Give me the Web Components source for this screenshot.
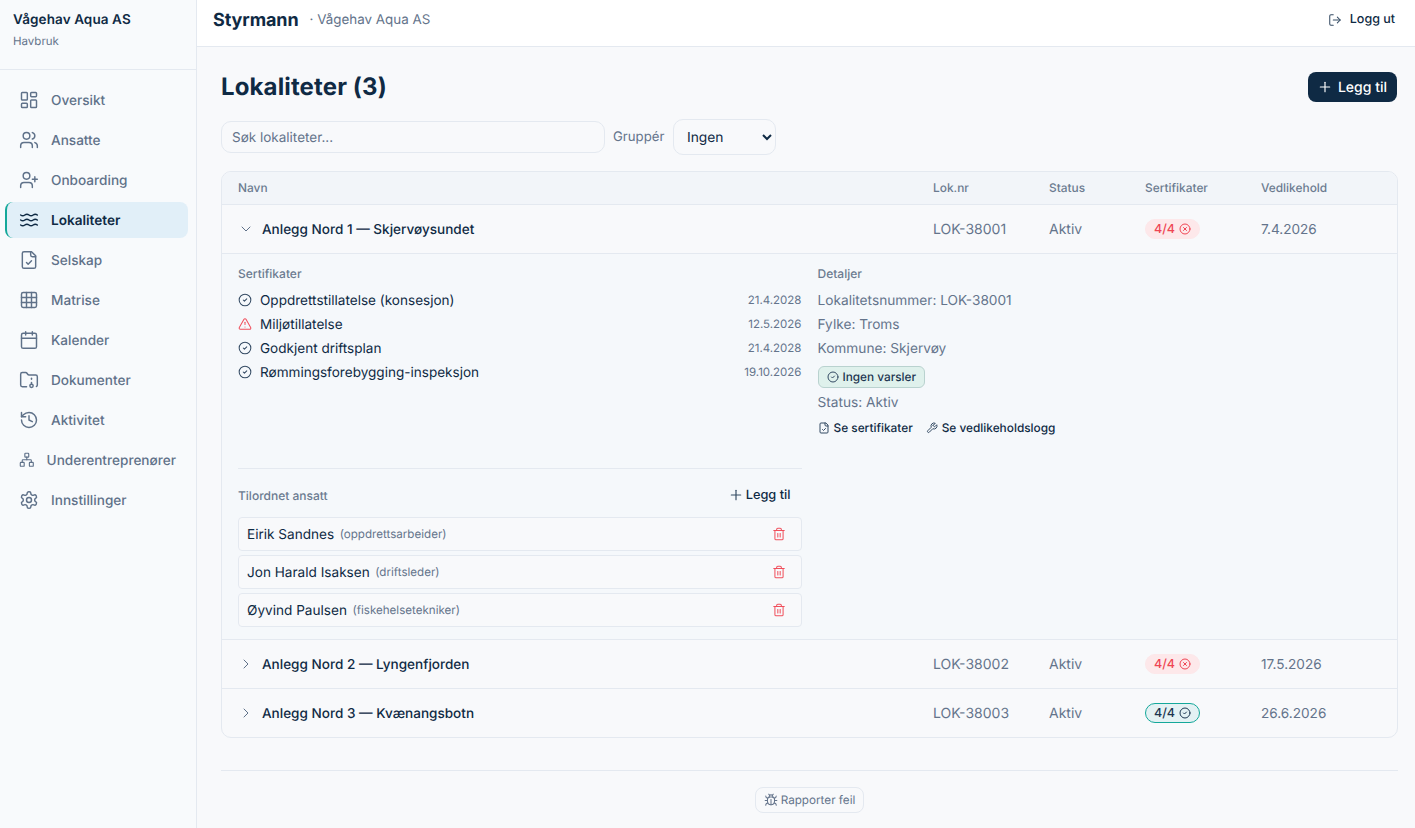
<!DOCTYPE html>
<html lang="no">
<head>
<meta charset="utf-8">
<title>Lokaliteter</title>
<style>
    html, body { margin: 0; height: 100%; overflow: hidden; }
    body { font-family: Inter, "Liberation Sans", sans-serif; color: #0f2a44; background: #f8f9fb; text-rendering: geometricPrecision; }
</style>
</head>
<body>
<app-shell>
    <app-sidebar slot="sidebar" company="Vågehav Aqua AS" sector="Havbruk">
        <nav-item icon="dashboard">Oversikt</nav-item>
        <nav-item icon="users">Ansatte</nav-item>
        <nav-item icon="userplus">Onboarding</nav-item>
        <nav-item icon="waves" active>Lokaliteter</nav-item>
        <nav-item icon="filecheck">Selskap</nav-item>
        <nav-item icon="grid">Matrise</nav-item>
        <nav-item icon="calendar">Kalender</nav-item>
        <nav-item icon="folder">Dokumenter</nav-item>
        <nav-item icon="history">Aktivitet</nav-item>
        <nav-item icon="network">Underentreprenører</nav-item>
        <nav-item icon="settings">Innstillinger</nav-item>
    </app-sidebar>
    <app-header slot="header" brand="Styrmann" company="· Vågehav Aqua AS"></app-header>
    <page-head>Lokaliteter (3)</page-head>
    <filter-bar></filter-bar>
    <loc-table>
        <loc-row name="Anlegg Nord 1 — Skjervøysundet" nr="LOK-38001" status="Aktiv" certs="4/4" tone="bad" date="7.4.2026" open>
            <loc-detail>
                <cert-row slot="certs" icon="check" date="21.4.2028">Oppdrettstillatelse (konsesjon)</cert-row>
                <cert-row slot="certs" icon="alert" date="12.5.2026">Miljøtillatelse</cert-row>
                <cert-row slot="certs" icon="check" date="21.4.2028">Godkjent driftsplan</cert-row>
                <cert-row slot="certs" icon="check" date="19.10.2026">Rømmingsforebygging-inspeksjon</cert-row>
                <staff-row slot="staff" name="Eirik Sandnes" role="(oppdrettsarbeider)"></staff-row>
                <staff-row slot="staff" name="Jon Harald Isaksen" role="(driftsleder)"></staff-row>
                <staff-row slot="staff" name="Øyvind Paulsen" role="(fiskehelsetekniker)"></staff-row>
            </loc-detail>
        </loc-row>
        <loc-row name="Anlegg Nord 2 — Lyngenfjorden" nr="LOK-38002" status="Aktiv" certs="4/4" tone="bad" date="17.5.2026"></loc-row>
        <loc-row name="Anlegg Nord 3 — Kvænangsbotn" nr="LOK-38003" status="Aktiv" certs="4/4" tone="ok" date="26.6.2026"></loc-row>
    </loc-table>
    <page-foot></page-foot>
</app-shell>

<script>
const ICONS = {
    dashboard: '<rect x="3" y="3" width="7" height="9" rx="1"/><rect x="14" y="3" width="7" height="5" rx="1"/><rect x="14" y="12" width="7" height="9" rx="1"/><rect x="3" y="16" width="7" height="5" rx="1"/>',
    users: '<path d="M16 21v-2a4 4 0 0 0-4-4H6a4 4 0 0 0-4 4v2"/><circle cx="9" cy="7" r="4"/><path d="M22 21v-2a4 4 0 0 0-3-3.87"/><path d="M16 3.13a4 4 0 0 1 0 7.75"/>',
    userplus: '<path d="M16 21v-2a4 4 0 0 0-4-4H6a4 4 0 0 0-4 4v2"/><circle cx="9" cy="7" r="4"/><path d="M19 8v6"/><path d="M22 11h-6"/>',
    waves: '<path d="M2 6c.6.5 1.2 1 2.5 1C7 7 7 5 9.5 5c2.6 0 2.4 2 5 2 2.5 0 2.5-2 5-2 1.3 0 1.9.5 2.5 1"/><path d="M2 12c.6.5 1.2 1 2.5 1 2.5 0 2.5-2 5-2 2.6 0 2.4 2 5 2 2.5 0 2.5-2 5-2 1.3 0 1.9.5 2.5 1"/><path d="M2 18c.6.5 1.2 1 2.5 1 2.5 0 2.5-2 5-2 2.6 0 2.4 2 5 2 2.5 0 2.5-2 5-2 1.3 0 1.9.5 2.5 1"/>',
    filecheck: '<path d="M15 2H6a2 2 0 0 0-2 2v16a2 2 0 0 0 2 2h12a2 2 0 0 0 2-2V7Z"/><path d="M14 2v4a2 2 0 0 0 2 2h4"/><path d="m9 15 2 2 4-4"/>',
    grid: '<rect x="3" y="3" width="18" height="18" rx="2"/><path d="M3 9h18"/><path d="M3 15h18"/><path d="M9 3v18"/><path d="M15 3v18"/>',
    calendar: '<path d="M8 2v4"/><path d="M16 2v4"/><rect x="3" y="4" width="18" height="18" rx="2"/><path d="M3 10h18"/>',
    folder: '<circle cx="15" cy="19" r="2"/><path d="M20.9 19.8A2 2 0 0 0 22 18V8a2 2 0 0 0-2-2h-7.9a2 2 0 0 1-1.69-.9L9.6 3.9A2 2 0 0 0 7.93 3H4a2 2 0 0 0-2 2v13a2 2 0 0 0 2 2h5.1"/><path d="M15 11v-1"/><path d="M15 17v-2"/>',
    history: '<path d="M3 12a9 9 0 1 0 9-9 9.75 9.75 0 0 0-6.74 2.74L3 8"/><path d="M3 3v5h5"/><path d="M12 7v5l4 2"/>',
    network: '<rect x="16" y="16" width="6" height="6" rx="1"/><rect x="2" y="16" width="6" height="6" rx="1"/><rect x="9" y="2" width="6" height="6" rx="1"/><path d="M5 16v-3a1 1 0 0 1 1-1h12a1 1 0 0 1 1 1v3"/><path d="M12 12V8"/>',
    settings: '<path d="M12.22 2h-.44a2 2 0 0 0-2 2v.18a2 2 0 0 1-1 1.73l-.43.25a2 2 0 0 1-2 0l-.15-.08a2 2 0 0 0-2.73.73l-.22.38a2 2 0 0 0 .73 2.73l.15.1a2 2 0 0 1 1 1.72v.51a2 2 0 0 1-1 1.74l-.15.09a2 2 0 0 0-.73 2.73l.22.38a2 2 0 0 0 2.73.73l.15-.08a2 2 0 0 1 2 0l.43.25a2 2 0 0 1 1 1.73V20a2 2 0 0 0 2 2h.44a2 2 0 0 0 2-2v-.18a2 2 0 0 1 1-1.73l.43-.25a2 2 0 0 1 2 0l.15.08a2 2 0 0 0 2.73-.73l.22-.39a2 2 0 0 0-.73-2.73l-.15-.08a2 2 0 0 1-1-1.74v-.5a2 2 0 0 1 1-1.74l.15-.09a2 2 0 0 0 .73-2.73l-.22-.38a2 2 0 0 0-2.73-.73l-.15.08a2 2 0 0 1-2 0l-.43-.25a2 2 0 0 1-1-1.73V4a2 2 0 0 0-2-2z"/><circle cx="12" cy="12" r="3"/>',
    logout: '<path d="m16 17 5-5-5-5"/><path d="M21 12H9"/><path d="M9 21H5a2 2 0 0 1-2-2V5a2 2 0 0 1 2-2h4"/>',
    plus: '<path d="M5 12h14"/><path d="M12 5v14"/>',
    down: '<path d="m6 9 6 6 6-6"/>',
    right: '<path d="m9 18 6-6-6-6"/>',
    check: '<circle cx="12" cy="12" r="10"/><path d="m9 12 2 2 4-4"/>',
    alert: '<path d="m21.73 18-8-14a2 2 0 0 0-3.48 0l-8 14A2 2 0 0 0 4 21h16a2 2 0 0 0 1.73-3"/><path d="M12 9v4"/><path d="M12 17h.01"/>',
    cross: '<circle cx="12" cy="12" r="10"/><path d="m15 9-6 6"/><path d="m9 9 6 6"/>',
    trash: '<path d="M3 6h18"/><path d="M19 6v14c0 1-1 2-2 2H7c-1 0-2-1-2-2V6"/><path d="M8 6V4c0-1 1-2 2-2h4c1 0 2 1 2 2v2"/><path d="M10 11v6"/><path d="M14 11v6"/>',
    wrench: '<path d="M14.7 6.3a1 1 0 0 0 0 1.4l1.6 1.6a1 1 0 0 0 1.4 0l3.77-3.77a6 6 0 0 1-7.94 7.94l-6.91 6.91a2.12 2.12 0 0 1-3-3l6.91-6.91a6 6 0 0 1 7.94-7.94l-3.76 3.76z"/>',
    bug: '<path d="m8 2 1.88 1.88"/><path d="M14.12 3.88 16 2"/><path d="M9 7.13v-1a3.003 3.003 0 1 1 6 0v1"/><path d="M12 20c-3.3 0-6-2.7-6-6v-3a4 4 0 0 1 4-4h4a4 4 0 0 1 4 4v3c0 3.3-2.7 6-6 6"/><path d="M12 20v-9"/><path d="M6.53 9C4.6 8.8 3 7.1 3 5"/><path d="M6 13H2"/><path d="M3 21c0-2.1 1.7-3.9 3.8-4"/><path d="M20.97 5c0 2.1-1.6 3.8-3.5 4"/><path d="M22 13h-4"/><path d="M17.2 17c2.1.1 3.8 1.9 3.8 4"/>'
}

// every component gets an open shadow root with its own style
class Base extends HTMLElement {
    constructor() {
        super()
        this.attachShadow({mode: 'open'})
    }

    attr(name) {
        return this.getAttribute(name) || ''
    }
}

class LcIcon extends Base {
    connectedCallback() {
        const size = this.attr('size') || 16
        const stroke = this.attr('stroke') || 1.75
        this.shadowRoot.innerHTML = `
        <style>
            :host { display: inline-flex; flex: 0 1 ${size}px; width: ${size}px; min-width: 0; color: var(--icon-color, currentColor); }
            svg { display: block; width: 100%; height: auto; }
        </style>
        <svg viewBox="0 0 24 24" fill="none" stroke="currentColor" stroke-width="${stroke}" stroke-linecap="round" stroke-linejoin="round">${ICONS[this.attr('name')]}</svg>`
    }
}

class AppShell extends Base {
    connectedCallback() {
        this.shadowRoot.innerHTML = `
        <style>
            :host { display: flex; height: 828px; width: 1415px; overflow: hidden; }
            .col { flex: 1; min-width: 0; display: flex; flex-direction: column; }
            main { flex: 1; padding: 24px 17px 0 24px; display: flex; flex-direction: column; }
        </style>
        <slot name="sidebar"></slot>
        <div class="col">
            <slot name="header"></slot>
            <main><slot></slot></main>
        </div>`
    }
}

class AppSidebar extends Base {
    connectedCallback() {
        this.shadowRoot.innerHTML = `
        <style>
            :host { display: block; flex: none; box-sizing: border-box; width: 197px; background: #f8fafc; border-right: 1px solid #e4e9f0; }
            .top { box-sizing: border-box; height: 70px; padding: 12px 13px; border-bottom: 1px solid #e4e9f0; }
            .company { font-size: 13.5px; letter-spacing: .1px; line-height: 16px; font-weight: 600; color: #0f2a44; }
            .sector { margin-top: 5px; font-size: 11.5px; line-height: 16px; color: #64748b; }
            nav { display: flex; flex-direction: column; gap: 4px; padding: 12px 8px 0 5px; }
        </style>
        <div class="top">
            <div class="company">${this.attr('company')}</div>
            <div class="sector">${this.attr('sector')}</div>
        </div>
        <nav><slot></slot></nav>`
    }
}

class NavItem extends Base {
    connectedCallback() {
        this.shadowRoot.innerHTML = `
        <style>
            :host { display: flex; align-items: center; gap: 12px; box-sizing: border-box; height: 36px; padding: 0 12px; border-left: 2px solid transparent; border-radius: 8px; font-size: 13.6px; font-weight: 500; color: #5f7189; white-space: nowrap; }
            :host([active]) { background: #e1eff8; border-left-color: #14a89a; color: #0f2a44; font-weight: 600; }
            span { margin-top: 2px; }
        </style>
        <lc-icon name="${this.attr('icon')}" size="20"></lc-icon>
        <span><slot></slot></span>`
    }
}

class AppHeader extends Base {
    connectedCallback() {
        this.shadowRoot.innerHTML = `
        <style>
            :host { display: flex; align-items: center; box-sizing: border-box; flex: none; height: 47px; padding: 0 20px 6px 16px; background: #fff; border-bottom: 1px solid #e4e9f0; }
            .brand { font-size: 18px; letter-spacing: -.1px; font-weight: 700; color: #0f2a44; }
            .company { margin-left: 11px; font-size: 13.4px; color: #64748b; }
            .logout { margin-left: auto; display: flex; align-items: center; gap: 8px; font-size: 12.5px; font-weight: 500; color: #0f2a44; }
            .logout span { margin-bottom: 2px; }
            lc-icon { --icon-color: #334a63; }
        </style>
        <span class="brand">${this.attr('brand')}</span>
        <span class="company">${this.attr('company')}</span>
        <span class="logout"><lc-icon name="logout" size="14"></lc-icon><span>Logg ut</span></span>`
    }
}

class PageHead extends Base {
    connectedCallback() {
        this.shadowRoot.innerHTML = `
        <style>
            :host { display: flex; align-items: center; justify-content: space-between; flex: none; height: 32px; margin-bottom: 16px; }
            h1 { margin: 0 0 1px; font-size: 24px; letter-spacing: .13px; font-weight: 700; color: #0f2a44; }
            button { display: flex; align-items: center; gap: 4.5px; height: 30px; margin-right: 1px; padding: 0 10px 0 9.5px; border: 0; border-radius: 8px; background: #0f2a44; color: #fff; font: 500 14px Inter, sans-serif; text-rendering: inherit; }
        </style>
        <h1><slot></slot></h1>
        <button><lc-icon name="plus" size="16"></lc-icon>Legg til</button>`
    }
}

class FilterBar extends Base {
    connectedCallback() {
        this.shadowRoot.innerHTML = `
        <style>
            :host { display: flex; align-items: center; flex: none; height: 36px; margin-bottom: 16px; font-size: 13.2px; color: #64748b; }
            input { box-sizing: border-box; width: 384px; height: 32px; padding: 2px 10px 0; border: 1px solid #e4e9f0; border-radius: 10px; background: #f8f9fb; font: 13.5px Inter, sans-serif; color: #0f2a44; outline: none; text-rendering: inherit; }
            input::placeholder { color: #64748b; opacity: 1; }
            label { margin: 0 8px 0 8px; flex: 0 0 52px; }
            select { box-sizing: border-box; width: 103px; height: 36px; padding: 1px 8px 0 9px; border: 1px solid #e4e9f0; border-radius: 10px; background: #f8f9fb; font: 13.8px Inter, sans-serif; color: #0f2a44; outline: none; text-rendering: inherit; }
        </style>
        <input placeholder="Søk lokaliteter...">
        <label>Gruppér</label>
        <select><option>Ingen</option></select>`
    }
}

const COLS = 'grid-template-columns: 1fr 116px 96px 116px 136px;'

class LocTable extends Base {
    connectedCallback() {
        this.shadowRoot.innerHTML = `
        <style>
            :host { display: block; flex: none; border: 1px solid #e4e9f0; border-radius: 10px; overflow: hidden; background: #f8f9fb; }
            .head { display: grid; ${COLS} align-items: center; box-sizing: border-box; height: 33px; padding: 0 0 1px 16px; background: #f2f5f9; border-bottom: 1px solid #e4e9f0; font-size: 11.9px; font-weight: 500; color: #6b7b90; }
        </style>
        <div class="head"><span>Navn</span><span>Lok.nr</span><span>Status</span><span>Sertifikater</span><span>Vedlikehold</span></div>
        <slot></slot>`
    }
}

class LocRow extends Base {
    connectedCallback() {
        const open = this.hasAttribute('open')
        this.shadowRoot.innerHTML = `
        <style>
            :host { display: block; border-bottom: 1px solid #e4e9f0; }
            :host(:last-child) { border-bottom: 0; }
            .row { display: grid; ${COLS} align-items: center; height: 48px; padding-left: 16px; font-size: 14px; color: #64748b; }
            .name { display: flex; align-items: center; gap: 8px; font-size: 13.55px; font-weight: 500; color: #0f2a44; }
            .name span { margin-top: 2px; }
            .name lc-icon { --icon-color: #5f7189; }
            .date { margin-top: 2px; font-size: 13.6px; }
        </style>
        <div class="row">
            <div class="name"><lc-icon name="${open ? 'down' : 'right'}" size="16" stroke="1.5"></lc-icon><span>${this.attr('name')}</span></div>
            <div>${this.attr('nr')}</div>
            <div>${this.attr('status')}</div>
            <div><cert-badge tone="${this.attr('tone')}">${this.attr('certs')}</cert-badge></div>
            <div class="date">${this.attr('date')}</div>
        </div>
        <slot></slot>`
    }
}

class CertBadge extends Base {
    connectedCallback() {
        const ok = this.attr('tone') === 'ok'
        this.shadowRoot.innerHTML = `
        <style>
            :host { display: inline-flex; align-items: center; justify-content: center; gap: 4px; box-sizing: border-box; width: 55px; height: 20px; border-radius: 10px; font-size: 12.5px; font-weight: 500; vertical-align: middle;
                background: ${ok ? '#e3f1f3' : '#fde8ea'}; color: ${ok ? '#1c3550' : '#ef4554'}; border: 1px solid ${ok ? '#14a89a' : '#fde8ea'}; }
        </style>
        <slot></slot><lc-icon name="${ok ? 'check' : 'cross'}" size="12" stroke="2"></lc-icon>`
    }
}

class LocDetail extends Base {
    connectedCallback() {
        this.shadowRoot.innerHTML = `
        <style>
            :host { display: grid; grid-template-columns: 1fr 1fr; gap: 16px; padding: 12px 16px; background: #f5f8fb; border-top: 1px solid #e4e9f0; }
            .label { font-size: 12px; line-height: 15px; font-weight: 500; color: #6b7b90; margin-bottom: 7px; }
            .staff { margin-top: 84px; padding-top: 16px; border-top: 1px solid #e4e9f0; }
            .staff-head { display: flex; align-items: center; justify-content: space-between; height: 20px; margin-bottom: 12px; padding-right: 11px; }
            .staff-head .label { margin: 0; }
            .add { display: flex; align-items: center; gap: 2px; font-size: 12.8px; font-weight: 500; color: #0f2a44; }
            .add lc-icon { --icon-color: #334a63; }
            .list { display: flex; flex-direction: column; gap: 4px; }
            .fact { height: 24px; line-height: 26px; font-size: 13.7px; color: #64748b; }
            .notice { display: inline-flex; align-items: center; gap: 4px; box-sizing: border-box; height: 22px; margin: 6px 0 2px; padding: 0 8px; border: 1px solid #b9d2cf; border-radius: 6px; background: #dff1ec; font-size: 11.8px; font-weight: 500; color: #1c3550; }
            .notice lc-icon { --icon-color: #334a63; }
            .links { display: flex; gap: 13px; margin-top: 2px; height: 24px; align-items: center; font-size: 11.85px; font-weight: 500; color: #0f2a44; }
            .links span { display: flex; align-items: center; gap: 4px; }
            .links lc-icon { --icon-color: #334a63; }
        </style>
        <div>
            <div class="label">Sertifikater</div>
            <slot name="certs"></slot>
            <div class="staff">
                <div class="staff-head">
                    <div class="label">Tilordnet ansatt</div>
                    <span class="add"><lc-icon name="plus" size="16"></lc-icon>Legg til</span>
                </div>
                <div class="list"><slot name="staff"></slot></div>
            </div>
        </div>
        <div>
            <div class="label">Detaljer</div>
            <div class="fact">Lokalitetsnummer: LOK-38001</div>
            <div class="fact">Fylke: Troms</div>
            <div class="fact">Kommune: Skjervøy</div>
            <div class="notice"><lc-icon name="check" size="12" stroke="2"></lc-icon>Ingen varsler</div>
            <div class="fact">Status: Aktiv</div>
            <div class="links">
                <span><lc-icon name="filecheck" size="12" stroke="2"></lc-icon>Se sertifikater</span>
                <span><lc-icon name="wrench" size="12" stroke="2"></lc-icon>Se vedlikeholdslogg</span>
            </div>
        </div>`
    }
}

class CertRow extends Base {
    connectedCallback() {
        const alert = this.attr('icon') === 'alert'
        this.shadowRoot.innerHTML = `
        <style>
            :host { display: flex; align-items: center; gap: 8px; height: 24px; font-size: 13.55px; color: #0f2a44; }
            lc-icon { --icon-color: ${alert ? '#f04f5c' : '#334a63'}; }
            .title { margin-top: 2px; }
            .date { margin-left: auto; font-size: 11.5px; color: #64748b; }
        </style>
        <lc-icon name="${this.attr('icon')}" size="14"></lc-icon>
        <span class="title"><slot></slot></span>
        <span class="date">${this.attr('date')}</span>`
    }
}

class StaffRow extends Base {
    connectedCallback() {
        this.shadowRoot.innerHTML = `
        <style>
            :host { display: flex; align-items: center; gap: 5.5px; box-sizing: border-box; height: 34px; padding: 0 15px 0 8px; border: 1px solid #e4e9f0; border-radius: 4px; background: #f8f9fb; font-size: 13.6px; color: #0f2a44; }
            .who { margin-top: 2px; }
            .role { font-size: 11.6px; color: #64748b; }
            lc-icon { margin-left: auto; --icon-color: #f04f5c; }
        </style>
        <span class="who">${this.attr('name')}</span>
        <span class="role">${this.attr('role')}</span>
        <lc-icon name="trash" size="14"></lc-icon>`
    }
}

class PageFoot extends Base {
    connectedCallback() {
        this.shadowRoot.innerHTML = `
        <style>
            :host { display: flex; justify-content: center; flex: none; margin-top: 32px; padding-top: 16px; border-top: 1px solid #e4e9f0; }
            button { display: flex; align-items: center; gap: 3px; height: 26px; padding: 0 7.5px; border: 1px solid #e4e9f0; border-radius: 8px; background: #f8f9fb; color: #64748b; font: 11.7px Inter, sans-serif; text-rendering: inherit; }
        </style>
        <button><lc-icon name="bug" size="14"></lc-icon>Rapporter feil</button>`
    }
}

customElements.define('lc-icon', LcIcon)
customElements.define('app-shell', AppShell)
customElements.define('app-sidebar', AppSidebar)
customElements.define('nav-item', NavItem)
customElements.define('app-header', AppHeader)
customElements.define('page-head', PageHead)
customElements.define('filter-bar', FilterBar)
customElements.define('loc-table', LocTable)
customElements.define('loc-row', LocRow)
customElements.define('cert-badge', CertBadge)
customElements.define('loc-detail', LocDetail)
customElements.define('cert-row', CertRow)
customElements.define('staff-row', StaffRow)
customElements.define('page-foot', PageFoot)
</script>
</body>
</html>
